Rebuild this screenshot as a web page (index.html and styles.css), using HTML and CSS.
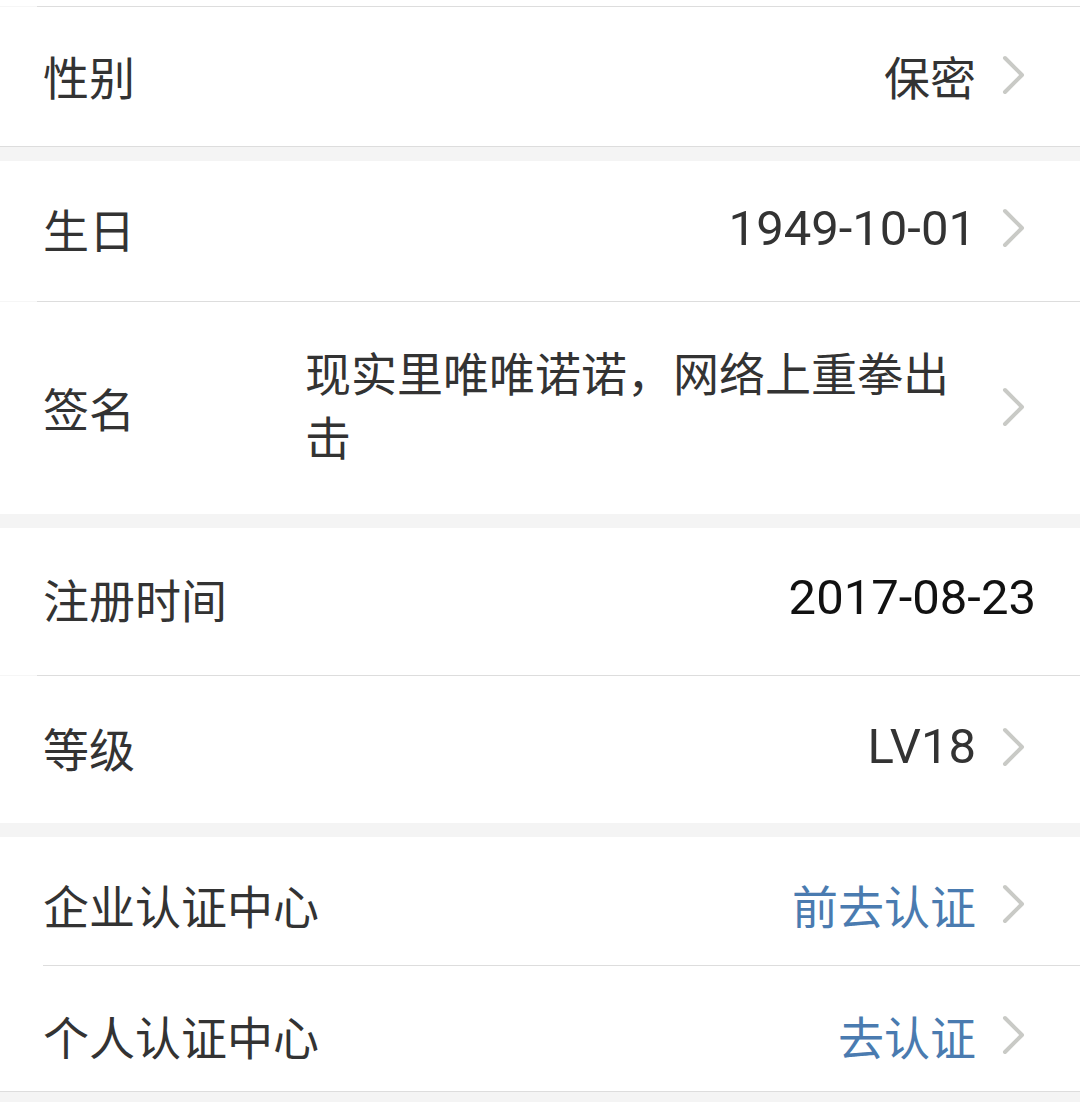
FILE: index.html
```html
<!DOCTYPE html>
<html lang="zh-CN">
  <head>
    <meta charset="UTF-8" />
    <meta name="viewport" content="width=device-width, initial-scale=1.0" />
    <title>个人资料</title>
    <link rel="stylesheet" href="styles.css">
  </head>
  <body>
    <div class="page">
      <div class="spacer"></div>
      <div class="line"></div>

      <div class="group">
        <div class="cell h139">
          <span class="label">性别</span>
          <span class="value">保密</span>
          <svg class="arrow" viewBox="0 0 24 40"><polyline points="3,3 20,20 3,37" /></svg>
        </div>
        <div class="line full"></div>
      </div>

      <div class="group">
        <div class="cell h140">
          <span class="label">生日</span>
          <span class="value num">1949-10-01</span>
          <svg class="arrow" viewBox="0 0 24 40"><polyline points="3,3 20,20 3,37" /></svg>
        </div>
        <div class="line"></div>
        <div class="cell h212">
          <span class="label">签名</span>
          <span class="value sign">现实里唯唯诺诺，网络上重拳出击</span>
          <svg class="arrow" viewBox="0 0 24 40"><polyline points="3,3 20,20 3,37" /></svg>
        </div>
      </div>

      <div class="group">
        <div class="cell h147 up6">
          <span class="label">注册时间</span>
          <span class="value num dark">2017-08-23</span>
        </div>
        <div class="line"></div>
        <div class="cell h147">
          <span class="label">等级</span>
          <span class="value num">LV18</span>
          <svg class="arrow" viewBox="0 0 24 40"><polyline points="3,3 20,20 3,37" /></svg>
        </div>
      </div>

      <div class="group">
        <div class="cell h128">
          <span class="label">企业认证中心</span>
          <span class="value link">前去认证</span>
          <svg class="arrow" viewBox="0 0 24 40"><polyline points="3,3 20,20 3,37" /></svg>
        </div>
        <div class="line inset"></div>
        <div class="cell h125">
          <span class="label">个人认证中心</span>
          <span class="value link">去认证</span>
          <svg class="arrow" viewBox="0 0 24 40"><polyline points="3,3 20,20 3,37" /></svg>
        </div>
        <div class="line full"></div>
      </div>
    </div>
  </body>
</html>
```

FILE: styles.css
```css
* {
  margin: 0;
  padding: 0;
  box-sizing: border-box;
}

body {
  font-family: Roboto, "Noto Sans CJK SC", sans-serif;
  background-color: #f4f4f4;
  color: #333333;
}

.page {
  width: 1080px;
  display: flex;
  flex-direction: column;
  gap: 14px;
}

.spacer {
  height: 6px;
  background-color: #ffffff;
  margin-bottom: -14px;
}

.line {
  height: 1px;
  background: linear-gradient(to right, #f6f6f6 37px, #dddddd 37px);
}

.page > .line {
  margin-bottom: -14px;
}

.line.full {
  background: #dddddd;
}

.line.inset {
  border-left: 43px solid #ffffff;
  background: #dddddd;
}

.group {
  background-color: #ffffff;
  display: flex;
  flex-direction: column;
}

.cell {
  display: flex;
  align-items: center;
  padding: 0 44px 0 43px;
  font-size: 46px;
}

.h139 { height: 139px; padding-bottom: 4px; }
.h140 { height: 140px; padding-bottom: 6px; }
.h212 { height: 212px; padding-bottom: 2px; }
.h147 { height: 147px; padding-bottom: 6px; }
.h147.up6 { padding-bottom: 8px; }
.h128 { height: 128px; padding-top: 6px; }
.h125 { height: 125px; padding-top: 12px; }

.label {
  min-width: 262px;
  flex-shrink: 0;
  white-space: nowrap;
}

.value {
  flex: 1;
  text-align: right;
}

.value.num {
  font-size: 49px;
}

.value.dark {
  color: #111111;
}

.value.link {
  color: #4a7bb0;
}

.value.sign {
  text-align: left;
  line-height: 64px;
}

.arrow {
  width: 24px;
  height: 40px;
  margin-left: 26px;
  margin-right: 10px;
  flex-shrink: 0;
  fill: none;
  stroke: #c9cac6;
  stroke-width: 4;
  stroke-linecap: round;
  stroke-linejoin: round;
}
```
